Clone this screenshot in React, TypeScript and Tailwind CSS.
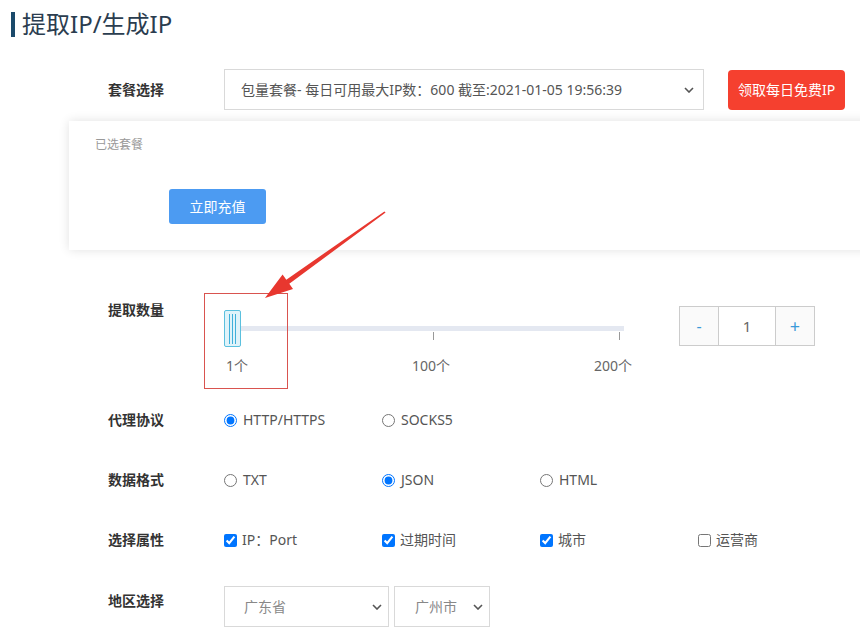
import { useState } from "react";

const Chevron = () => (
  <svg width="10" height="6" viewBox="0 0 10 6" className="shrink-0">
    <polyline points="1,1 5,5 9,1" fill="none" stroke="#555" strokeWidth="1.6" />
  </svg>
);

const FakeSelect = ({
  text,
  className,
  textClass,
}: {
  text: string;
  className: string;
  textClass: string;
}) => (
  <div className={`flex items-center justify-between border border-[#d9d9d9] bg-white ${className}`}>
    <span className={textClass}>{text}</span>
    <Chevron />
  </div>
);

const Label = ({ children, className = "" }: { children: string; className?: string }) => (
  <div className={`w-[116px] shrink-0 text-[14px] font-bold text-[#333] leading-[20px] ${className}`}>{children}</div>
);

const App = () => {
  const [count, setCount] = useState(1);

  const protocols = [
    { name: "HTTP/HTTPS", checked: true },
    { name: "SOCKS5", checked: false },
  ];
  const formats = [
    { name: "TXT", checked: false },
    { name: "JSON", checked: true },
    { name: "HTML", checked: false },
  ];
  const attrs = [
    { name: "IP：Port", checked: true },
    { name: "过期时间", checked: true },
    { name: "城市", checked: true },
    { name: "运营商", checked: false },
  ];

  return (
    <div
      className="relative w-[860px] h-[643px] overflow-hidden bg-white"
      style={{ fontFamily: '"Noto Sans", "Noto Sans CJK SC", sans-serif' }}
    >
      {/* Title */}
      <div className="flex items-center pt-[11px] pl-[11px]">
        <div className="w-[4px] h-[25px] bg-[#1b4a6b]" />
        <span className="ml-[7px] text-[24px] leading-[26px] text-[#2b3d4f]">提取IP/生成IP</span>
      </div>

      {/* Package row */}
      <div className="flex items-center pl-[108px] mt-[32px]">
        <Label>套餐选择</Label>
        <FakeSelect
          text="包量套餐- 每日可用最大IP数：600 截至:2021-01-05 19:56:39"
          className="w-[480px] h-[41px] pl-[16px] pr-[9px]"
          textClass="text-[14px] text-[#555]"
        />
        <button className="ml-[24px] w-[117px] h-[40px] rounded-[4px] bg-[#f5402f] text-white text-[14px]">
          领取每日免费IP
        </button>
      </div>

      {/* Selected package panel */}
      <div className="ml-[69px] mt-[11px] w-[820px] h-[129px] bg-white shadow-[0_0_10px_rgba(0,0,0,0.12)] pt-[16px] pl-[26px]">
        <div className="text-[12px] leading-[16px] text-[#999]">已选套餐</div>
        <button className="ml-[74px] mt-[36px] w-[97px] h-[35px] rounded-[3px] bg-[#4c9bf2] text-white text-[14px]">
          立即充值
        </button>
      </div>

      {/* Quantity row */}
      <div className="flex items-start pl-[108px] mt-[50px]">
        <Label>提取数量</Label>
        <div className="relative w-[400px] h-[76px] pt-[10px]">
          <div className="flex items-center">
            <div className="flex items-center justify-center gap-[2px] w-[17px] h-[37px] border border-[#5bc0de] bg-[#dff3fa] rounded-[2px]">
              <div className="w-px h-[30px] bg-[#3fb0da]" />
              <div className="w-px h-[30px] bg-[#3fb0da]" />
              <div className="w-px h-[30px] bg-[#3fb0da]" />
            </div>
            <div className="w-[383px] h-[5px] bg-[#e4e8f1]" />
          </div>
          {/* marks */}
          <div className="absolute left-[209px] top-[32px] w-px h-[8px] bg-[#999]" />
          <div className="absolute left-[395px] top-[32px] w-px h-[8px] bg-[#999]" />
          <span className="absolute left-[2px] top-[56px] whitespace-nowrap text-[14px] leading-[20px] text-[#666]">1个</span>
          <span className="absolute left-[188px] top-[56px] whitespace-nowrap text-[14px] leading-[20px] text-[#666]">100个</span>
          <span className="absolute left-[370px] top-[56px] whitespace-nowrap text-[14px] leading-[20px] text-[#666]">200个</span>
        </div>
        <div className="ml-[55px] mt-[6px] flex h-[40px] border border-[#ccc]">
          <button
            onClick={() => setCount(Math.max(1, count - 1))}
            className="w-[39px] bg-[#fafafa] text-[#3a9ad9] text-[16px] border-r border-[#ccc]"
          >
            -
          </button>
          <div className="w-[56px] flex items-center justify-center text-[15px] text-[#666]">{count}</div>
          <button
            onClick={() => setCount(count + 1)}
            className="w-[39px] bg-[#fafafa] text-[#3a9ad9] text-[18px] border-l border-[#ccc]"
          >
            +
          </button>
        </div>
      </div>

      {/* Protocol row */}
      <div className="flex items-center pl-[108px] mt-[34px]">
        <Label>代理协议</Label>
        {protocols.map((p) => (
          <label key={p.name} className="w-[158px] flex items-center gap-[6px] text-[14px] leading-[20px] text-[#555]">
            <input type="radio" name="protocol" defaultChecked={p.checked} className="m-0 w-[13px] h-[13px]" />
            {p.name}
          </label>
        ))}
      </div>

      {/* Format row */}
      <div className="flex items-center pl-[108px] mt-[40px]">
        <Label>数据格式</Label>
        {formats.map((p) => (
          <label key={p.name} className="w-[158px] flex items-center gap-[6px] text-[14px] leading-[20px] text-[#555]">
            <input type="radio" name="format" defaultChecked={p.checked} className="m-0 w-[13px] h-[13px]" />
            {p.name}
          </label>
        ))}
      </div>

      {/* Attribute row */}
      <div className="flex items-center pl-[108px] mt-[40px]">
        <Label>选择属性</Label>
        {attrs.map((p) => (
          <label key={p.name} className="w-[158px] flex items-center gap-[5px] text-[14px] leading-[20px] text-[#555]">
            <input type="checkbox" defaultChecked={p.checked} className="m-0 w-[13px] h-[13px]" />
            {p.name}
          </label>
        ))}
      </div>

      {/* Region row */}
      <div className="flex items-start pl-[108px] mt-[36px]">
        <Label className="mt-[5px]">地区选择</Label>
        <FakeSelect text="广东省" className="w-[165px] h-[41px] pl-[19px] pr-[6px]" textClass="text-[14px] text-[#888]" />
        <FakeSelect text="广州市" className="ml-[5px] w-[96px] h-[41px] pl-[20px] pr-[6px]" textClass="text-[14px] text-[#888]" />
      </div>

      {/* Annotation overlay */}
      <div className="absolute left-[204px] top-[293px] w-[84px] h-[96px] border border-[#d9534f] pointer-events-none" />
      <svg className="absolute left-0 top-0 pointer-events-none" width="860" height="643">
        <polygon
          points="265,298 293,289 289.3,283.7 385.6,212.6 384.4,211.4 286.3,279.7 282.6,274.4"
          fill="#e8372f"
        />
      </svg>
    </div>
  );
};

export default App;
